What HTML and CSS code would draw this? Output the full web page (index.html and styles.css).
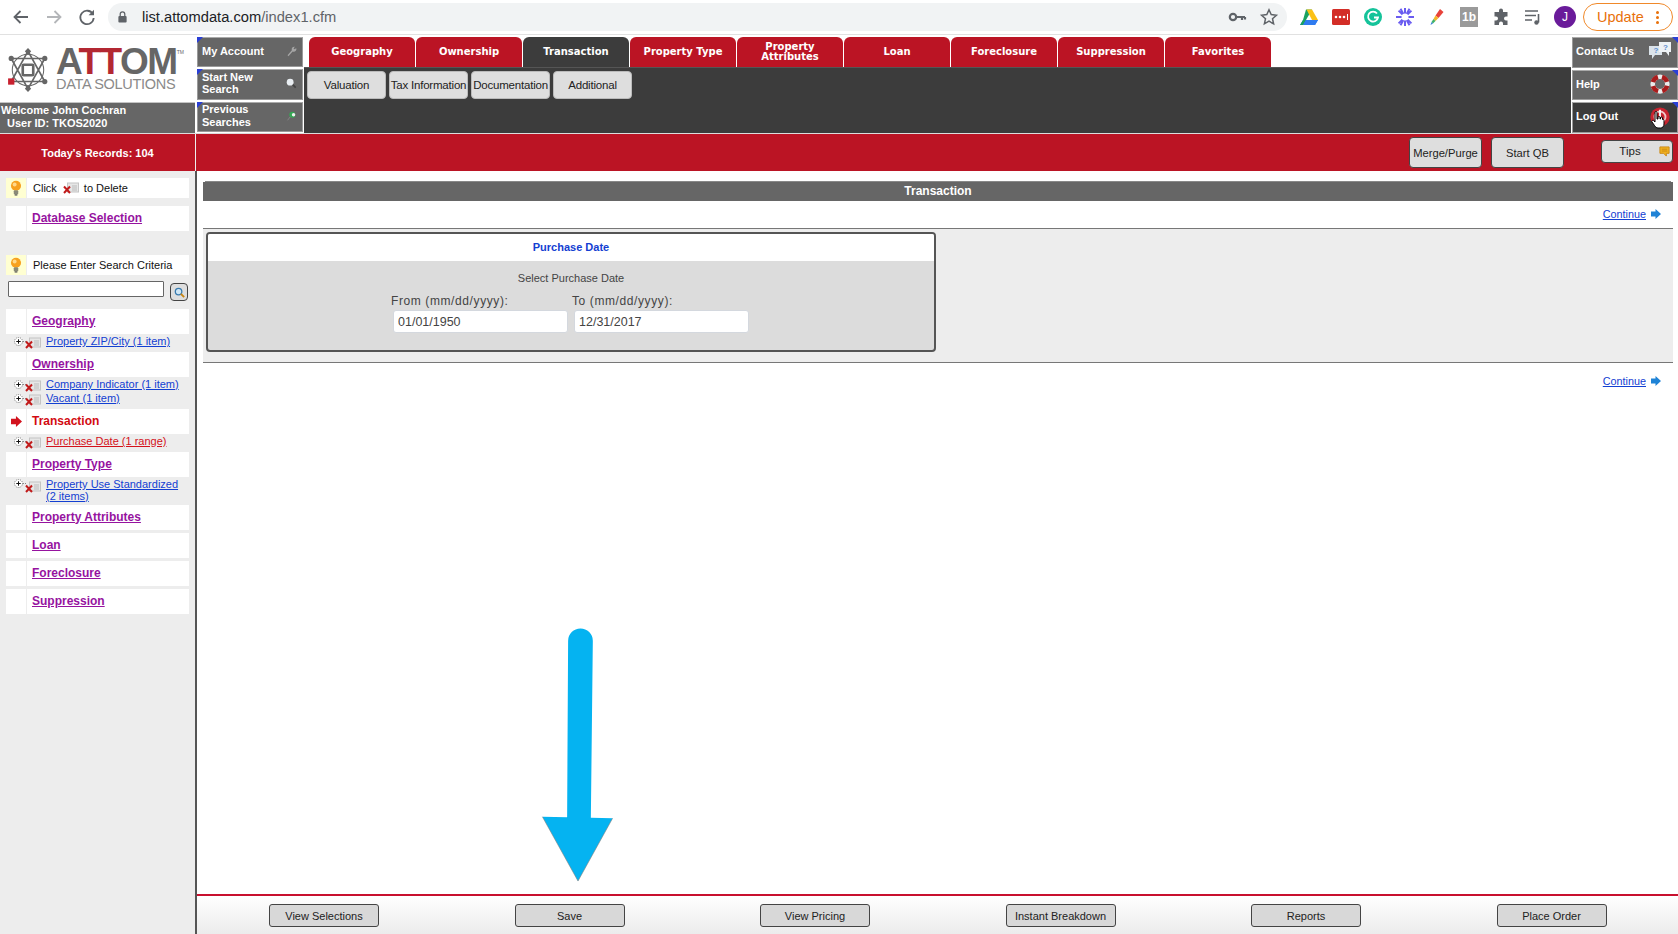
FILE: index.html
```html
<!DOCTYPE html>
<html lang="en">
<head>
<meta charset="utf-8">
<title>ATTOM Data Solutions</title>
<link rel="stylesheet" href="styles.css">
</head>
<body>
<svg class="defs" width="0" height="0" aria-hidden="true">
  <defs>
    <symbol id="bulb" viewBox="0 0 20 20">
      <circle cx="10" cy="7.5" r="5.6" fill="#f7a11f"/>
      <circle cx="8.5" cy="6" r="2.2" fill="#ffd98a"/>
      <rect x="7.5" y="12.5" width="5" height="4.5" rx="1" fill="#8a8a78"/>
      <rect x="8.5" y="17" width="3" height="1.4" fill="#555"/>
    </symbol>
    <symbol id="xcard" viewBox="0 0 16 12">
      <rect x="4.5" y="1" width="11" height="9" fill="#e6e6e6" stroke="#c4c4c4"/>
      <path d="M9 4h5M9 6h5M9 8h5" stroke="#bbb"/>
      <path d="M1 4.5l6 6.5M7 4.5l-6 6.5" stroke="#c11b1b" stroke-width="2"/>
    </symbol>
    <symbol id="plus" viewBox="0 0 13 11">
      <circle cx="4.5" cy="5.5" r="4" fill="#fff" stroke="#777" stroke-dasharray="1 1"/>
      <path d="M2.300 5.500h4.400M4.500 3.300v4.400" stroke="#111"/>
      <path d="M9 5.500h4" stroke="#888" stroke-dasharray="1 1"/>
    </symbol>
    <symbol id="go" viewBox="0 0 10 10">
      <path d="M0 2.500h4.500V0L10 5 4.500 10V7.500H0z" fill="currentColor"/>
    </symbol>
  </defs>
</svg>

<header class="chrome">
  <div class="nav">
    <svg class="nav-ic" viewBox="0 0 20 20"><path d="M17 10H4M9.500 4L3.500 10l6 6" fill="none" stroke="#5f6368" stroke-width="1.800"/></svg>
    <svg class="nav-ic" viewBox="0 0 20 20"><path d="M3 10h13M10.500 4l6 6-6 6" fill="none" stroke="#b4b6b9" stroke-width="1.800"/></svg>
    <svg class="nav-ic" viewBox="0 0 20 20"><path d="M15.800 7A6.700 6.700 0 1 0 16.700 11" fill="none" stroke="#5f6368" stroke-width="1.800"/><path d="M17 2.800v5.400h-5.400z" fill="#5f6368"/></svg>
  </div>
  <div class="omnibox">
    <svg class="lock" viewBox="0 0 12 14"><path d="M3.500 6V4a2.500 2.500 0 0 1 5 0v2" fill="none" stroke="#5f6368" stroke-width="1.400"/><rect x="1.500" y="6" width="9" height="7" rx="1" fill="#5f6368"/></svg>
    <span class="url"><span class="url-host">list.attomdata.com</span>/index1.cfm</span>
    <svg class="omni-ic" viewBox="0 0 20 20"><circle cx="6" cy="10" r="3.200" fill="none" stroke="#5f6368" stroke-width="2.200"/><path d="M9 10h9M15 10v3M18 10v2.500" fill="none" stroke="#5f6368" stroke-width="2.200"/></svg>
    <svg class="omni-ic" viewBox="0 0 20 20"><path d="M10 2.800l2.200 4.800 5.200.6-3.900 3.500 1.100 5.100L10 14.200l-4.600 2.600 1.100-5.100-3.900-3.500 5.200-.6z" fill="none" stroke="#5f6368" stroke-width="1.500"/></svg>
  </div>
  <div class="exts">
    <svg class="ext" viewBox="0 0 20 20"><path d="M7 2.500h6l-6 10.500H4z" fill="#1aa260"/><path d="M13 2.500l6 10.500h-6L7.500 2.500z" fill="#fbc116"/><path d="M4 13h15l-3 5H1z" fill="#2f7bf0"/><path d="M1 18l3-5 3 0-3 5z" fill="#1aa260"/><path d="M7 13h12l-3 5H4z" fill="#2f7bf0"/></svg>
    <svg class="ext" viewBox="0 0 20 20"><rect x="1" y="2" width="18" height="16" rx="1.500" fill="#d32d27"/><circle cx="5" cy="10" r="1.300" fill="#fff"/><circle cx="9" cy="10" r="1.300" fill="#fff"/><circle cx="13" cy="10" r="1.300" fill="#fff"/><path d="M16.500 7v6" stroke="#fff"/></svg>
    <svg class="ext" viewBox="0 0 20 20"><circle cx="10" cy="10" r="9" fill="#15c39a"/><path d="M14 6.500A5 5 0 1 0 15 10.500h-4" fill="none" stroke="#fff" stroke-width="1.800"/></svg>
    <svg class="ext" viewBox="0 0 20 20"><g stroke="#6a5cf0" stroke-width="2"><path d="M10 1v18M1 10h18M3.600 3.600l12.800 12.800M16.400 3.600L3.600 16.400M5.500 1.800l9 16.400M14.500 1.800l-9 16.400"/></g><circle cx="10" cy="10" r="3.500" fill="#fff"/></svg>
    <svg class="ext" viewBox="0 0 20 20"><path d="M13 2l3.500 3-5 6-3-2.500z" fill="#e8423a"/><path d="M8.500 8.500l3 2.500-3 3-2-2z" fill="#f4b42a"/><path d="M6.500 12l2 2-2.500 2.500-1.500-1.500z" fill="#3fb268"/><path d="M4.500 15l1.500 1.500L3.500 18z" fill="#3c83d8"/></svg>
    <span class="ext ext-1b">1b</span>
    <svg class="ext" viewBox="0 0 20 20"><path d="M8 3.500a2 2 0 0 1 4 0V5h4.500v4.500h-1.500a2 2 0 0 0 0 4h1.500V18H12v-1.500a2 2 0 0 0-4 0V18H3.500v-4.500H5a2 2 0 0 0 0-4H3.500V5H8z" fill="#5f6368"/></svg>
    <svg class="ext" viewBox="0 0 20 20"><path d="M2 4h13M2 8.500h11M2 13h7" stroke="#5f6368" stroke-width="1.600"/><path d="M15.500 7v8.500" stroke="#5f6368" stroke-width="1.600"/><circle cx="13.500" cy="15.500" r="2.200" fill="#5f6368"/></svg>
    <span class="avatar">J</span>
  </div>
  <div class="update"><span>Update</span><span class="dots"><i></i><i></i><i></i></span></div>
</header>

<section class="top">
  <div class="brand">
    <div class="logo">
      <svg class="logo-mark" viewBox="0 0 40 42">
        <g fill="none" stroke="#666" stroke-width="1.600">
          <path d="M20 3L36 32H4zM20 39L4 10h32z"/>
          <circle cx="20" cy="21" r="15" stroke-width="1"/>
          <rect x="15" y="16" width="10" height="10" rx="1" stroke-width="2.500"/>
        </g>
        <g fill="#666">
          <path d="M20 0l3 3-3 4-3-4zM20 42l3-3-3-4-3 4z"/>
          <circle cx="36" cy="10" r="2.500"/><circle cx="36" cy="32" r="2.500"/><circle cx="4" cy="10" r="2.500"/>
        </g>
        <rect x="1" y="29" width="6" height="6" fill="#c8202f"/>
      </svg>
      <div class="logo-text">
        <div class="logo-name">A<span class="logo-t">TT</span>OM<sup class="tm">TM</sup></div>
        <div class="logo-sub">DATA SOLUTIONS</div>
      </div>
    </div>
    <div class="welcome">
      <div>Welcome John Cochran</div>
      <div class="welcome-id">User ID: TKOS2020</div>
    </div>
  </div>

  <nav class="sidemenu">
    <a class="menu-btn"><span>My Account</span>
      <svg class="menu-ic" viewBox="0 0 14 14"><path d="M3 12l5-6a3 3 0 0 1 3.500-4L10 4l1.500 1L13 3.500A3 3 0 0 1 9 7.500L4 13z" fill="#a5a5a5"/></svg></a>
    <a class="menu-btn"><span>Start New<br>Search</span>
      <svg class="menu-ic" viewBox="0 0 14 14"><circle cx="6" cy="6" r="4" fill="#e9eef2"/><path d="M9 9l3.500 3.500" stroke="#444" stroke-width="2"/></svg></a>
    <a class="menu-btn"><span>Previous<br>Searches</span>
      <svg class="menu-ic" viewBox="0 0 14 14"><circle cx="8.500" cy="5.500" r="3.500" fill="#34a853"/><circle cx="10" cy="5.500" r="2" fill="#eee"/><path d="M6 8l-3 4" stroke="#888"/></svg></a>
  </nav>

  <div class="center">
    <div class="tabs">
      <a class="tab">Geography</a>
      <a class="tab">Ownership</a>
      <a class="tab tab-on">Transaction</a>
      <a class="tab">Property Type</a>
      <a class="tab tab-2l">Property<br>Attributes</a>
      <a class="tab">Loan</a>
      <a class="tab">Foreclosure</a>
      <a class="tab">Suppression</a>
      <a class="tab">Favorites</a>
    </div>
    <div class="subbar">
      <a class="subtab">Valuation</a>
      <a class="subtab">Tax Information</a>
      <a class="subtab">Documentation</a>
      <a class="subtab">Additional</a>
    </div>
  </div>

  <nav class="rightmenu">
    <a class="menu-btn menu-right"><span>Contact Us</span>
      <svg class="right-ic" viewBox="0 0 24 20"><path d="M1 5h13v9H7l-3 4v-4H1z" fill="#dbe3ea"/><path d="M11 1h12v10h-2v4l-3-4h-7z" fill="#eef2f5"/><text x="5.500" y="12" class="q">?</text><text x="15" y="8.500" class="q">?</text></svg></a>
    <a class="menu-btn menu-right"><span>Help</span>
      <svg class="right-ic" viewBox="0 0 24 24"><circle cx="12" cy="12" r="8" fill="none" stroke="#eaeaea" stroke-width="5"/><circle cx="12" cy="12" r="8" fill="none" stroke="#a81c1c" stroke-width="5" stroke-dasharray="8 4.570" stroke-dashoffset="-2"/></svg></a>
    <a class="menu-btn menu-right menu-dark"><span>Log Out</span>
      <svg class="right-ic" viewBox="0 0 24 24"><circle cx="12" cy="12" r="10.500" fill="#c8242f"/><circle cx="12" cy="12" r="6" fill="none" stroke="#f0c8c8" stroke-width="2"/><path d="M12 4v8" stroke="#fff" stroke-width="2"/></svg>
      <svg class="hand" viewBox="0 0 14 18"><path d="M4 1.500a1 1 0 0 1 2 0V8h1V6.500a1 1 0 0 1 2 0V8h.5V7a1 1 0 0 1 2 0v1.500a1 1 0 0 1 1.500 1V13c0 2.500-1.500 4-3.500 4H7c-1.500 0-2.500-1-3.500-2.500L1 11c-.8-1.200.8-2.200 1.800-1.200L4 11z" fill="#fff" stroke="#000" stroke-width="1"/></svg></a>
  </nav>
</section>

<section class="band">
  <div class="band-left">Today's Records: 104</div>
  <div class="band-right">
    <button class="band-btn">Merge/Purge</button>
    <button class="band-btn">Start QB</button>
    <button class="tips">Tips
      <svg class="tips-ic" viewBox="0 0 12 12"><path d="M1 1h10v7H8v3L5 8H1z" fill="#f1b11f" stroke="#c98511"/><path d="M3 3.500h6M3 5.500h6" stroke="#c98511"/></svg>
    </button>
  </div>
</section>

<div class="layout">
  <aside class="sidebar">
    <div class="row row-note"><span class="row-icon row-yellow"><svg class="bulb"><use href="#bulb"/></svg></span><span class="row-text note-text">Click <svg class="xcard xcard-inline"><use href="#xcard"/></svg> to Delete</span></div>
    <div class="row row-db"><span class="row-icon"></span><span class="row-text"><a class="sec">Database Selection</a></span></div>
    <div class="row row-note row-please"><span class="row-icon row-yellow"><svg class="bulb"><use href="#bulb"/></svg></span><span class="row-text note-text">Please Enter Search Criteria</span></div>
    <div class="search">
      <input class="search-input" type="text" aria-label="Search">
      <button class="search-btn" aria-label="Search"><svg viewBox="0 0 14 14"><circle cx="6" cy="6" r="3.500" fill="#cfe6f5" stroke="#3a7cb0" stroke-width="1.400"/><path d="M8.500 8.500l3.500 3.500" stroke="#c98511" stroke-width="2"/></svg></button>
    </div>

    <div class="group group-first">
      <div class="row"><span class="row-icon"></span><span class="row-text"><a class="sec">Geography</a></span></div>
      <div class="item"><svg class="plus"><use href="#plus"/></svg><svg class="xcard"><use href="#xcard"/></svg><a class="link">Property ZIP/City (1 item)</a></div>
    </div>
    <div class="group">
      <div class="row"><span class="row-icon"></span><span class="row-text"><a class="sec">Ownership</a></span></div>
      <div class="item"><svg class="plus"><use href="#plus"/></svg><svg class="xcard"><use href="#xcard"/></svg><a class="link">Company Indicator (1 item)</a></div>
      <div class="item"><svg class="plus"><use href="#plus"/></svg><svg class="xcard"><use href="#xcard"/></svg><a class="link">Vacant (1 item)</a></div>
    </div>
    <div class="group">
      <div class="row"><span class="row-icon row-go"><svg class="go-ic"><use href="#go"/></svg></span><span class="row-text"><a class="sec sec-on">Transaction</a></span></div>
      <div class="item"><svg class="plus"><use href="#plus"/></svg><svg class="xcard"><use href="#xcard"/></svg><a class="link link-on">Purchase Date (1 range)</a></div>
    </div>
    <div class="group">
      <div class="row"><span class="row-icon"></span><span class="row-text"><a class="sec">Property Type</a></span></div>
      <div class="item item-2l"><svg class="plus"><use href="#plus"/></svg><svg class="xcard"><use href="#xcard"/></svg><a class="link">Property Use Standardized<br>(2 items)</a></div>
    </div>
    <div class="group group-tight"><div class="row"><span class="row-icon"></span><span class="row-text"><a class="sec">Property Attributes</a></span></div></div>
    <div class="group group-tight"><div class="row"><span class="row-icon"></span><span class="row-text"><a class="sec">Loan</a></span></div></div>
    <div class="group group-tight"><div class="row"><span class="row-icon"></span><span class="row-text"><a class="sec">Foreclosure</a></span></div></div>
    <div class="group group-tight"><div class="row"><span class="row-icon"></span><span class="row-text"><a class="sec">Suppression</a></span></div></div>
  </aside>

  <main class="main">
    <div class="content">
      <div class="heading">Transaction</div>
      <div class="continue-row"><a class="continue">Continue</a><svg class="go-blue"><use href="#go"/></svg></div>
      <div class="panel">
        <form class="box">
          <div class="box-head">Purchase Date</div>
          <div class="box-body">
            <div class="box-lead">Select Purchase Date</div>
            <div class="dates">
              <label class="date-field"><span class="date-label">From (mm/dd/yyyy):</span><input class="date-input" type="text" value="01/01/1950"></label>
              <label class="date-field"><span class="date-label">To (mm/dd/yyyy):</span><input class="date-input" type="text" value="12/31/2017"></label>
            </div>
          </div>
        </form>
      </div>
      <div class="continue-row continue-low"><a class="continue">Continue</a><svg class="go-blue"><use href="#go"/></svg></div>
    </div>
    <footer class="footer">
      <button class="foot-btn">View Selections</button>
      <button class="foot-btn">Save</button>
      <button class="foot-btn">View Pricing</button>
      <button class="foot-btn">Instant Breakdown</button>
      <button class="foot-btn">Reports</button>
      <button class="foot-btn">Place Order</button>
    </footer>
  </main>
</div>

<svg class="arrow" viewBox="0 0 74 260" aria-hidden="true">
  <path d="M27 13a12.500 12.500 0 0 1 25 0L50 192l22 .5L37 256 1 191l25 .5z" fill="#05b3f1"/>
  <path d="M1 191L37 256l35-63.500" fill="none" stroke="#7d7d7d" stroke-width="1" stroke-opacity=".6"/>
</svg>
</body>
</html>
```
FILE: styles.css
```css
* { box-sizing: border-box; }
html, body { margin: 0; padding: 0; }
body {
  width: 1678px;
  height: 934px;
  overflow: hidden;
  position: relative;
  background: #fff;
  font-family: "Liberation Sans", Arial, sans-serif;
  color: #222;
}
.defs { position: absolute; }
a { cursor: pointer; }
button { font-family: inherit; cursor: pointer; }

/* Browser chrome */
.chrome {
  height: 35px;
  display: flex;
  align-items: center;
  border-bottom: 1px solid #e1e1e1;
}
.nav { width: 108px; display: flex; gap: 13px; padding-left: 11px; }
.nav-ic { width: 20px; height: 20px; }
.omnibox {
  width: 1179px;
  height: 28px;
  background: #f1f3f4;
  border-radius: 14px;
  display: flex;
  align-items: center;
  padding: 0 8px 0 9px;
}
.lock { width: 11px; height: 14px; margin-right: 14px; }
.url { font-size: 14.700px; color: #5f6368; flex: 1; }
.url-host { color: #202124; }
.omni-ic { width: 20px; height: 20px; margin-left: 12px; }
.exts { display: flex; align-items: center; gap: 12px; margin-left: 12px; }
.ext { width: 20px; height: 20px; display: block; }
.ext-1b {
  background: #9a9a9a; color: #fff; font-size: 12px; font-weight: bold;
  text-align: center; line-height: 20px; width: 18px; margin: 0 1px;
}
.avatar {
  width: 22px; height: 22px; margin-left: -1px; border-radius: 50%;
  background: #6a1b9a; color: #fff; font-size: 12px;
  display: flex; align-items: center; justify-content: center;
}
.update {
  margin-left: 7px;
  width: 90px;
  height: 28px;
  border: 1px solid #f0892a;
  border-radius: 14px;
  color: #e8710a;
  font-size: 14.500px;
  display: flex;
  align-items: center;
  justify-content: space-between;
  padding: 0 13px 0 13px;
}
.dots { display: flex; flex-direction: column; gap: 2px; }
.dots i { width: 3px; height: 3px; border-radius: 50%; background: #e8710a; display: block; }

/* Top application header */
.top { display: flex; height: 98px; }
.brand { width: 195px; display: flex; flex-direction: column; }
.logo { height: 67px; display: flex; align-items: center; padding: 3px 0 0 7px; gap: 7px; }
.logo-mark { width: 42px; height: 44px; flex: none; }
.logo-text { color: #666; }
.logo-name {
  font-size: 37px; font-weight: bold; line-height: 27px; letter-spacing: -1.5px; height: 27px;
  white-space: nowrap; position: relative;
}
.logo-t { color: #b32832; }
.tm { font-size: 5px; font-weight: normal; letter-spacing: 0; vertical-align: top; line-height: 8px; }
.logo-sub { font-size: 14.500px; line-height: 16px; letter-spacing: -.3px; color: #8a8a8a; margin-top: 1px; white-space: nowrap; }
.welcome {
  flex: 1;
  background: #666;
  border-top: 1px solid #c4c4c4;
  color: #fff;
  font-size: 11px;
  font-weight: bold;
  line-height: 13px;
  padding: 1px 0 0 1px;
}
.welcome-id { padding-left: 6px; }

.sidemenu { width: 109px; display: flex; flex-direction: column; gap: 2px; padding: 2px 1px 1px 1px; border-left: 1px solid #fff; background: #fff; }
.rightmenu { width: 107px; display: flex; flex-direction: column; gap: 2px; padding: 2px 0 0 1px; background: #fff; }
.menu-btn {
  flex: 1;
  position: relative;
  background: #666;
  border: 1px solid #9a9a9a;
  border-top-color: #aaa;
  color: #fff;
  font-size: 11px;
  font-weight: bold;
  line-height: 12.500px;
  display: flex;
  align-items: center;
  justify-content: space-between;
  padding: 0 5px 2px 4px;
}
.menu-btn::before {
  content: "";
  position: absolute;
  left: -1px;
  top: -1px;
  border-style: solid;
  border-width: 6px 6px 0 0;
  border-color: #2a3fd6 transparent transparent transparent;
}
.menu-right { padding-left: 3px; }
.menu-right::before {
  left: auto;
  right: -1px;
  border-width: 0 6px 6px 0;
  border-color: transparent #2a3fd6 transparent transparent;
}
.menu-dark { background: #3c3c3c; }
.menu-ic { width: 12px; height: 12px; flex: none; }
.right-ic { width: 24px; height: 22px; flex: none; }
.hand { position: absolute; right: 12px; top: 8px; width: 14px; height: 18px; }
.q { font-size: 8px; font-weight: bold; fill: #5d8fd0; font-family: "Liberation Sans", sans-serif; }

.center { flex: 1; display: flex; flex-direction: column; }
.tabs { height: 32px; display: flex; gap: 1px; padding: 2px 0 0 5px; }
.tab {
  width: 106px;
  background: #bb1424;
  color: #fff;
  border-radius: 6px 6px 0 0;
  font-family: "DejaVu Sans", sans-serif;
  font-size: 10px;
  font-weight: bold;
  display: flex;
  align-items: center;
  justify-content: center;
  text-align: center;
  padding-bottom: 1px;
}
.tab-2l { line-height: 9.500px; }
.tab-on { background: #3c3c3c; }
.subbar {
  flex: 1;
  background: #3c3c3c;
  border-top: 1px solid #555;
  display: flex;
  align-items: flex-start;
  gap: 3px;
  padding: 3px 0 0 3px;
}
.subtab {
  width: 79px;
  height: 28px;
  background: #dedede;
  border: 1px solid #bbb;
  border-radius: 4px;
  color: #222;
  font-size: 11.500px;
  white-space: nowrap;
  display: flex;
  align-items: center;
  justify-content: center;
  letter-spacing: -.2px;
}

/* Red band */
.band { height: 38px; display: flex; border-top: 1px solid #ddd; }
.band-left {
  width: 196px;
  background: #bb1424;
  border-right: 1px solid #eee;
  color: #fff;
  font-size: 11px;
  font-weight: bold;
  text-align: center;
  line-height: 38px;
}
.band-right {
  flex: 1;
  background: #bb1424;
  display: flex;
  align-items: flex-start;
  padding: 3px 5px 0 0;
  justify-content: flex-end;
}
.band-btn {
  width: 73px;
  height: 31px;
  margin-right: 9px;
  padding: 0;
  background: #dedede;
  border: 1px solid #444;
  border-radius: 4px;
  color: #222;
  font-size: 11.200px;
}
.band-btn + .band-btn { margin-right: 37px; }
.tips {
  width: 72px;
  height: 23px;
  margin-top: 3px;
  background: #dedede;
  border: 1px solid #444;
  border-radius: 4px;
  color: #222;
  font-size: 11.500px;
  position: relative;
  padding: 0 14px 2px 0;
}
.tips-ic { position: absolute; right: 2px; top: 5px; width: 11px; height: 11px; }

/* Body */
.layout { display: flex; height: 763px; }
.sidebar {
  width: 197px;
  flex: none;
  background: #ededed;
  border-right: 2px solid #555;
  padding: 7px 6px 0;
  font-size: 11px;
}
.row { display: flex; height: 25px; }
.row-note { height: 20px; }
.row-db { margin-top: 8px; }
.row-please { margin-top: 24px; }
.row-icon {
  width: 20px;
  flex: none;
  background: #fff;
  margin-right: 1px;
  display: flex;
  align-items: center;
  justify-content: center;
}
.row-yellow { background: #ffffd2; }
.row-text { flex: 1; background: #fff; display: flex; align-items: center; padding: 0 0 2px 5px; }
.note-text { padding: 0 0 0 6px; color: #111; font-size: 11px; }
.bulb { width: 18px; height: 18px; }
.sec { color: #96139f; font-size: 12px; font-weight: bold; text-decoration: underline; }
.sec-on { color: #d20a11; text-decoration: none; }
.go-ic { width: 11px; height: 11px; color: #d2121d; }
.search { display: flex; height: 22px; margin-top: 6px; padding-left: 2px; gap: 6px; }
.search-input {
  width: 156px;
  height: 16px;
  padding: 0;
  background: #fff;
  border: 1px solid #666;
  border-radius: 1px;
}
.search-btn {
  width: 18px;
  height: 18px;
  margin-top: 2px;
  padding: 1px;
  background: #dedede;
  border: 1px solid #444;
  border-radius: 4px;
  display: flex;
  align-items: center;
  justify-content: center;
}
.search-btn svg { width: 13px; height: 13px; }
.group { margin-top: 4px; }
.group-first { margin-top: 6px; }
.group-tight { margin-top: 3px; }
.item { display: flex; height: 14px; align-items: center; padding: 0 0 0 8px; }
.item-2l { height: 25px; align-items: flex-start; padding-top: 1px; }
.plus { width: 13px; height: 11px; flex: none; }
.xcard { width: 16px; height: 12px; flex: none; margin-left: -2px; margin-right: 5px; margin-top: 3px; }
.xcard-inline { margin: 0 5px 0 6px; vertical-align: middle; }
.link { color: #1340d2; font-size: 11px; line-height: 12px; text-decoration: underline; letter-spacing: 0; white-space: nowrap; }
.link-on { color: #d4111b; }

.main { flex: 1; display: flex; flex-direction: column; position: relative; }
.content { flex: 1; padding: 8px 5px 0 6px; }
.heading {
  background: #666;
  color: #fff;
  font-size: 12px;
  font-weight: bold;
  height: 19px;
  line-height: 19px;
  text-align: center;
  margin-top: 3px;
  box-shadow: 0 -3px 0 -2px #888, 0 -2px 0 0 #fff;
}
.continue-row {
  height: 27px;
  display: flex;
  align-items: center;
  justify-content: flex-end;
  gap: 5px;
  padding: 0 12px 2px 0;
}
.continue { color: #1340d2; font-size: 10.800px; text-decoration: underline; }
.go-blue { width: 10px; height: 10px; color: #1f83d6; }
.continue-low { height: 36px; padding-bottom: 1px; }
.panel {
  height: 135px;
  background: #ededed;
  border-top: 1px solid #777;
  border-bottom: 1px solid #777;
  padding: 3px 0 0 3px;
}
.box {
  width: 730px;
  height: 120px;
  border: 2px solid #555;
  border-radius: 4px;
  overflow: hidden;
  display: flex;
  flex-direction: column;
  background: #dcdcdc;
  margin: 0;
}
.box-head {
  height: 27px;
  background: #fff;
  color: #1340d2;
  font-size: 11px;
  font-weight: bold;
  text-align: center;
  line-height: 27px;
}
.box-body { flex: 1; padding-top: 10px; color: #444; }
.box-lead { font-size: 11px; line-height: 14px; text-align: center; }
.dates { display: flex; justify-content: center; gap: 6px; margin-top: 9px; }
.date-field { width: 175px; display: flex; flex-direction: column; gap: 2px; }
.date-label { font-size: 12px; line-height: 14px; letter-spacing: .6px; margin-left: -2px; white-space: nowrap; }
.date-input {
  width: 100%;
  height: 23px;
  border: 1px solid #d4d8de;
  border-radius: 3px;
  background: #fff;
  color: #444;
  font-family: inherit;
  font-size: 12.500px;
  padding: 0 4px;
}

.footer {
  height: 40px;
  border-top: 2px solid #c8102e;
  background: linear-gradient(#fff, #ececec);
  display: flex;
  align-items: flex-start;
  gap: 135.500px;
  padding: 8px 0 0 72px;
}
.foot-btn {
  width: 110px;
  height: 23px;
  flex: none;
  padding: 0;
  background: #d8d8d8;
  border: 1px solid #444;
  border-radius: 3px;
  color: #222;
  font-size: 11px;
}

/* Annotation arrow lying over the page */
.arrow { position: absolute; left: 541px; top: 628px; width: 74px; height: 257px; }
```
